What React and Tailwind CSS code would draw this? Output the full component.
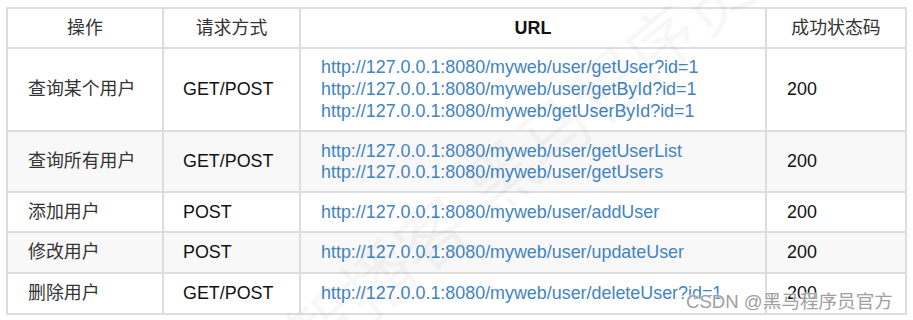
const rows = [
  {
    op: "查询某个用户",
    method: "GET/POST",
    urls: [
      "http://127.0.0.1:8080/myweb/user/getUser?id=1",
      "http://127.0.0.1:8080/myweb/user/getById?id=1",
      "http://127.0.0.1:8080/myweb/getUserById?id=1",
    ],
    h: "h-[83px]",
  },
  {
    op: "查询所有用户",
    method: "GET/POST",
    urls: [
      "http://127.0.0.1:8080/myweb/user/getUserList",
      "http://127.0.0.1:8080/myweb/user/getUsers",
    ],
    h: "h-[61px]",
  },
  {
    op: "添加用户",
    method: "POST",
    urls: ["http://127.0.0.1:8080/myweb/user/addUser"],
    h: "h-[40px]",
  },
  {
    op: "修改用户",
    method: "POST",
    urls: ["http://127.0.0.1:8080/myweb/user/updateUser"],
    h: "h-[41px]",
  },
  {
    op: "删除用户",
    method: "GET/POST",
    urls: ["http://127.0.0.1:8080/myweb/user/deleteUser?id=1"],
    h: "h-[41px]",
  },
];

const font = "font-['Liberation_Sans','Noto_Sans_CJK_SC',sans-serif]";

export default function App() {
  return (
    <div className={`relative w-[913px] h-[320px] bg-white overflow-hidden ${font}`}>
      <div className="pt-[7px] pl-[6px]">
        <table className="table-fixed border-collapse w-[901px] text-[17.9px] leading-[21px] text-[#111]">
          <colgroup>
            <col className="w-[156px]" />
            <col className="w-[137px]" />
            <col className="w-[466px]" />
            <col className="w-[140px]" />
          </colgroup>
          <thead>
            <tr className="h-[40px]">
              <th className="border-2 border-[#dddddd] p-0 font-normal text-[#333]">操作</th>
              <th className="border-2 border-[#dddddd] p-0 font-normal text-[#333]">请求方式</th>
              <th className="border-2 border-[#dddddd] p-0 font-bold text-[#111]">URL</th>
              <th className="border-2 border-[#dddddd] p-0 font-normal text-[#333]">成功状态码</th>
            </tr>
          </thead>
          <tbody>
            {rows.map((r, i) => (
              <tr key={i} className={`${r.h} ${i % 2 === 1 ? "bg-[#f8f8f8]" : "bg-white"}`}>
                <td className="border-2 border-[#dddddd] pl-[20px] py-0 text-[#333]">{r.op}</td>
                <td className="border-2 border-[#dddddd] pl-[19px] py-0">{r.method}</td>
                <td className="border-2 border-[#dddddd] pl-[20px] py-0 text-[#4183c4]">
                  {r.urls.map((u, j) => (
                    <div key={u} className={j === 1 && r.urls.length === 3 ? "py-px" : ""}>{u}</div>
                  ))}
                </td>
                <td className="border-2 border-[#dddddd] pl-[20px] py-0">200</td>
              </tr>
            ))}
          </tbody>
        </table>
      </div>

      {/* faint diagonal watermark */}
      <div className="pointer-events-none absolute left-[170px] top-[150px] -rotate-[40deg] text-[70px] leading-none text-black/[0.03] whitespace-nowrap">
        传智播客 黑马程序员
      </div>

      <div className="pointer-events-none absolute left-[686px] top-[288px] text-[18.6px] text-[#a0a0a0] [text-shadow:0_0_2px_#fff,0_0_2px_#fff]">
        CSDN @黑马程序员官方
      </div>
    </div>
  );
}
